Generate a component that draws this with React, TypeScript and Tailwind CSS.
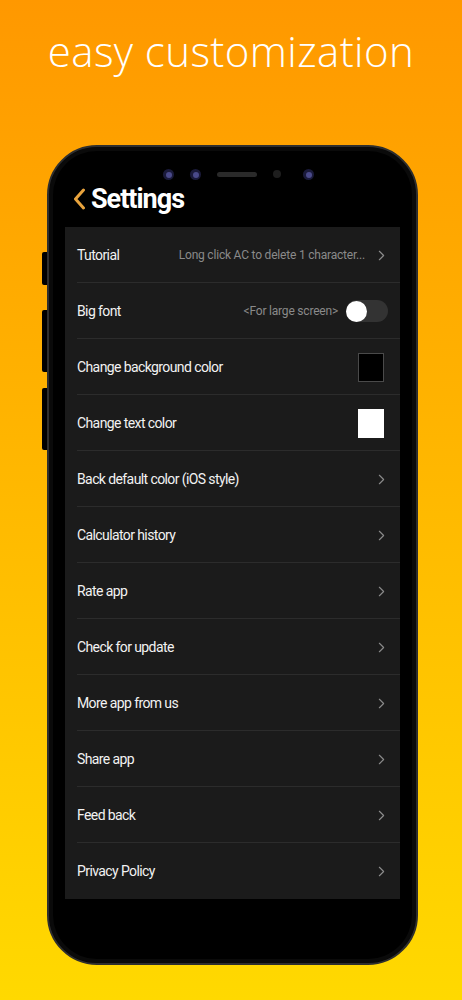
import { ChevronRight } from 'lucide-react';

type Row = {
  label: string;
  hint?: string;
  kind: 'chevron' | 'toggle' | 'black' | 'white';
};

const rows: Row[] = [
  { label: 'Tutorial', hint: 'Long click AC to delete 1 character...', kind: 'chevron' },
  { label: 'Big font', hint: '<For large screen>', kind: 'toggle' },
  { label: 'Change background color', kind: 'black' },
  { label: 'Change text color', kind: 'white' },
  { label: 'Back default color (iOS style)', kind: 'chevron' },
  { label: 'Calculator history', kind: 'chevron' },
  { label: 'Rate app', kind: 'chevron' },
  { label: 'Check for update', kind: 'chevron' },
  { label: 'More app from us', kind: 'chevron' },
  { label: 'Share app', kind: 'chevron' },
  { label: 'Feed back', kind: 'chevron' },
  { label: 'Privacy Policy', kind: 'chevron' },
];

function Lens() {
  return (
    <div className="w-[11px] h-[11px] rounded-full bg-[#1a1a3a] flex items-center justify-center">
      <div className="w-[6px] h-[6px] rounded-full bg-[#4a4a8a]" />
    </div>
  );
}

function SettingRow({ row, last }: { row: Row; last: boolean }) {
  return (
    <div className="h-[56px] pl-[12px] pr-[12px] flex items-center relative">
      <span className="text-[14px] text-[#f2f2f2] tracking-[-0.6px] whitespace-nowrap">{row.label}</span>
      <div className="ml-auto flex items-center">
        {row.hint && (
          <span className="text-[12px] text-[#8a8a8a] tracking-[-0.2px] whitespace-nowrap mr-[8px]">{row.hint}</span>
        )}
        {row.kind === 'chevron' && <ChevronRight className="w-[17px] h-[17px] text-[#8a8a8a] -mr-[2px]" strokeWidth={1.6} />}
        {row.kind === 'toggle' && (
          <div className="w-[42px] h-[22px] rounded-full bg-[#333333] flex items-center">
            <div className="w-[21px] h-[21px] rounded-full bg-white" />
          </div>
        )}
        {row.kind === 'black' && <div className="w-[26px] h-[29px] bg-black border border-[#4a4a4a] mr-[4px]" />}
        {row.kind === 'white' && <div className="w-[26px] h-[29px] bg-white mr-[4px]" />}
      </div>
      {!last && <div className="absolute left-[12px] right-0 bottom-0 h-px bg-[#2c2c2c]" />}
    </div>
  );
}

export default function App() {
  return (
    <div
      className="w-full h-[1000px] overflow-hidden bg-gradient-to-b from-[#ff9800] to-[#ffd900] flex flex-col"
      style={{ fontFamily: 'Roboto, "Liberation Sans", sans-serif' }}
    >
      <h1
        className="text-center text-white text-[42px] tracking-[0.4px] pt-[25px] leading-[52px]"
        style={{ fontFamily: '"Open Sans", Lato, sans-serif', fontWeight: 300 }}
      >
        easy customization
      </h1>

      <div className="relative ml-[47px] mt-[68px] w-[371px] h-[820px]">
        {/* side buttons */}
        <div className="absolute -left-[5px] top-[107px] w-[5px] h-[33px] bg-black rounded-l-[2px]" />
        <div className="absolute -left-[5px] top-[165px] w-[5px] h-[62px] bg-black rounded-l-[2px]" />
        <div className="absolute -left-[5px] top-[243px] w-[5px] h-[62px] bg-black rounded-l-[2px]" />

        <div className="w-full h-full rounded-[50px] bg-black border-[2px] border-[#2e2e2e] flex flex-col overflow-hidden shadow-[inset_0_0_0_4px_#0a0a0a]">
          {/* camera bar */}
          <div className="h-[38px] pt-[22px] flex items-start justify-center gap-[16px] pl-[12px]">
            <Lens />
            <Lens />
            <div className="w-[40px] h-[5px] rounded-full bg-[#2a2a2a] mt-[3px]" />
            <div className="w-[8px] h-[8px] rounded-full bg-[#1e1e1e] mt-[1px]" />
            <div className="ml-[6px]">
              <Lens />
            </div>
          </div>

          {/* header */}
          <div className="h-[30px] flex items-center pl-[24px] -mt-[1px]">
            <svg width="13" height="22" viewBox="0 0 13 22" className="mr-[5px]">
              <path d="M10.5 2 L2.5 11 L10.5 20" fill="none" stroke="#e8a33d" strokeWidth="3" strokeLinecap="round" strokeLinejoin="round" />
            </svg>
            <span className="text-[27px] font-bold text-white tracking-[-1px] leading-none">Settings</span>
          </div>

          {/* list */}
          <div className="mx-[16px] mt-[13px] bg-[#1b1b1b]">
            {rows.map((row, i) => (
              <SettingRow key={row.label} row={row} last={i === rows.length - 1} />
            ))}
          </div>
        </div>
      </div>
    </div>
  );
}
